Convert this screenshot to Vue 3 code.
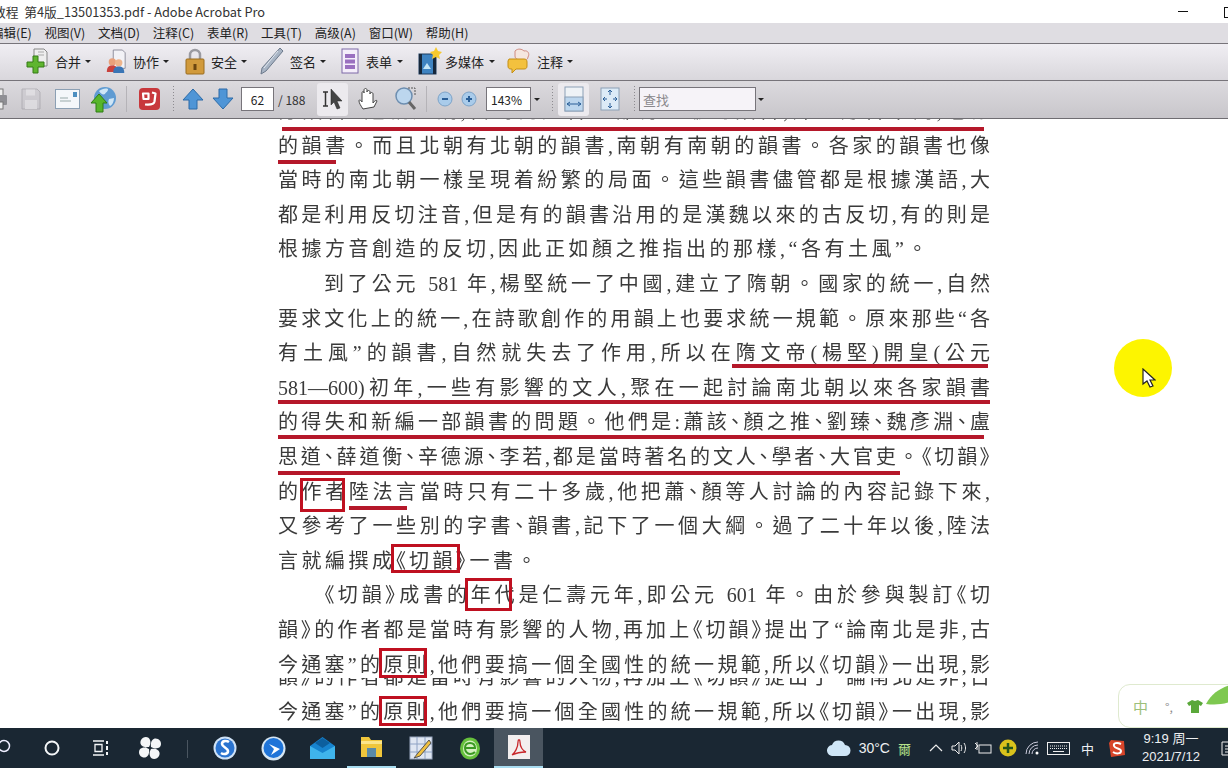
<script setup>
const menus = ['编辑(E)', '视图(V)', '文档(D)', '注释(C)', '表单(R)', '工具(T)', '高级(A)', '窗口(W)', '帮助(H)']

const clippedTop = '分韻書。這就是說,當時南北各地都有人編寫韻書,并且方言不同,也像'
const lines = [
  { t: '的韻書。而且北朝有北朝的韻書,南朝有南朝的韻書。各家的韻書也像' },
  { t: '當時的南北朝一樣呈現着紛繁的局面。這些韻書儘管都是根據漢語,大' },
  { t: '都是利用反切注音,但是有的韻書沿用的是漢魏以來的古反切,有的則是' },
  { t: '根據方音創造的反切,因此正如顏之推指出的那樣,“各有土風”。', last: true },
  { t: '到了公元 581 年,楊堅統一了中國,建立了隋朝。國家的統一,自然', indent: true },
  { t: '要求文化上的統一,在詩歌創作的用韻上也要求統一規範。原來那些“各' },
  { t: '有土風”的韻書,自然就失去了作用,所以在隋文帝(楊堅)開皇(公元' },
  { t: '581—600)初年,一些有影響的文人,聚在一起討論南北朝以來各家韻書' },
  { t: '的得失和新編一部韻書的問題。他們是:蕭該、顏之推、劉臻、魏彥淵、盧' },
  { t: '思道、薛道衡、辛德源、李若,都是當時著名的文人、學者、大官吏。《切韻》' },
  { t: '的作者陸法言當時只有二十多歲,他把蕭、顏等人討論的內容記錄下來,' },
  { t: '又參考了一些別的字書、韻書,記下了一個大綱。過了二十年以後,陸法' },
  { t: '言就編撰成《切韻》一書。', last: true },
  { t: '《切韻》成書的年代是仁壽元年,即公元 601 年。由於參與製訂《切', indent: true },
  { t: '韻》的作者都是當時有影響的人物,再加上《切韻》提出了“論南北是非,古' },
  { t: '今通塞”的原則,他們要搞一個全國性的統一規範,所以《切韻》一出現,影' }
]
const stripText = lines[14].t
const lastLine = lines[15].t

// 句号占整格，其余标点收窄
const pieces = (t) => t.split(/(。)/).filter(Boolean)

// 红色批注，坐标相对于 .doc
const marks = [
  { x: 282, y: 8, w: 702, h: 4 },
  { x: 278, y: 41, w: 58, h: 4 },
  { x: 732, y: 245, w: 256, h: 4 },
  { x: 278, y: 281, w: 712, h: 4 },
  { x: 278, y: 316, w: 706, h: 4 },
  { x: 278, y: 352, w: 622, h: 4 },
  { x: 349, y: 387, w: 58, h: 4 },
  { x: 300, y: 359, w: 45, h: 34, box: true },
  { x: 391, y: 425, w: 69, h: 29, box: true },
  { x: 465, y: 459, w: 47, h: 33, box: true },
  { x: 379, y: 529, w: 48, h: 30, box: true },
  { x: 379, y: 577, w: 48, h: 30, box: true }
]
const markStyle = (m) => ({ left: m.x + 'px', top: m.y + 'px', width: m.w + 'px', height: m.h + 'px' })
</script>

<template>
  <div class="screen">
    <div class="titlebar">
      <span class="title">教程&nbsp;&nbsp;第4版_13501353.pdf - Adobe Acrobat Pro</span>
      <span class="win-min"></span>
      <span class="win-max"></span>
    </div>

    <div class="menubar">
      <span v-for="m in menus" :key="m">{{ m }}</span>
    </div>

    <div class="tools-one">
      <div class="tool">
        <svg width="24" height="28" viewBox="0 0 24 28">
          <path d="M9 2h10l3 3v14H9z" fill="#eee" stroke="#888"/>
          <path d="M13 5h6M13 8h6" stroke="#aaa"/>
          <path d="M8 9h5v6h6v5h-6v6H8v-6H2v-5h6z" fill="#5fb52f" stroke="#357a16"/>
        </svg>
        <span>合并</span><i class="caret"></i>
      </div>
      <div class="tool">
        <svg width="22" height="28" viewBox="0 0 24 28">
          <path d="M9 2h10l3 3v17H9z" fill="#f2f2f6" stroke="#8a8a98"/>
          <circle cx="8" cy="15" r="4" fill="#e9a07a"/>
          <path d="M2 26c0-5 2-7 6-7s6 2 6 7z" fill="#c9413c"/>
          <circle cx="15" cy="16" r="4" fill="#edb48c"/>
          <path d="M9 27c0-5 2-7 6-7s6 2 6 7z" fill="#3a75b5"/>
        </svg>
        <span>协作</span><i class="caret"></i>
      </div>
      <div class="tool">
        <svg width="20" height="28" viewBox="0 0 20 28">
          <path d="M5 13V8a5 5 0 0 1 10 0v5" fill="none" stroke="#9a9aa0" stroke-width="2.5"/>
          <rect x="1" y="12" width="18" height="15" rx="1" fill="#d19a3c" stroke="#9a6c1e"/>
          <rect x="8.5" y="17" width="3" height="6" fill="#6b4510"/>
        </svg>
        <span>安全</span><i class="caret"></i>
      </div>
      <div class="tool">
        <svg width="24" height="28" viewBox="0 0 24 28">
          <path d="M20 1l3 3L6 24l-5 3 1-6z" fill="#a8b4c4" stroke="#6d7a8c"/>
          <path d="M18 4L4 21" stroke="#e2e8f0"/>
        </svg>
        <span>签名</span><i class="caret"></i>
      </div>
      <div class="tool wide">
        <svg width="18" height="28" viewBox="0 0 18 28">
          <rect x="1" y="2" width="16" height="24" fill="#f4eefa" stroke="#7e6aa8"/>
          <rect x="4" y="7" width="10" height="4" fill="#9a70c0"/>
          <rect x="4" y="12.500" width="10" height="4" fill="#9a70c0"/>
          <rect x="4" y="18" width="10" height="4" fill="#9a70c0"/>
        </svg>
        <span>表单</span><i class="caret"></i>
      </div>
      <div class="tool tight">
        <svg width="25" height="28" viewBox="0 0 25 28">
          <rect x="1" y="7" width="17" height="20" fill="#3f84c2" stroke="#1c3c60"/>
          <path d="M1 7h3v20H1zM15 7h3v20h-3z" fill="#16283c"/>
          <path d="M5 22l4-6 4 6z" fill="#c4e6f8"/>
          <path d="M18 0l2 4 4 1-3 3 1 4-4-2-4 2 1-4-3-3 4-1z" fill="#f6c92e"/>
        </svg>
        <span>多媒体</span><i class="caret"></i>
      </div>
      <div class="tool">
        <svg width="24" height="28" viewBox="0 0 24 28">
          <path d="M8 4c3-3 7-2 9 0 4-1 6 3 4 6 0 3-4 4-7 3-3 0-6-1-6-4z" fill="#f5e6df" stroke="#d08a80"/>
          <path d="M2 12h15c2 0 3 1 3 3v4c0 2-1 3-3 3H9l-4 4v-4H4c-2 0-3-1-3-3v-5z" fill="#f3c13e" stroke="#c48e14"/>
        </svg>
        <span>注释</span><i class="caret"></i>
      </div>
    </div>

    <div class="tools-two">
      <svg width="21" height="24" viewBox="0 0 21 24">
        <rect x="4" y="2" width="13" height="7" fill="#eee" stroke="#777"/>
        <rect x="1" y="8" width="20" height="10" rx="1" fill="#8f8f94"/>
        <rect x="4" y="15" width="13" height="7" fill="#eee" stroke="#777"/>
      </svg>
      <svg width="20" height="24" viewBox="0 0 20 24" opacity=".45">
        <path d="M1 2h15l3 3v17H1z" fill="#c6c4ca" stroke="#8b8990"/>
        <rect x="5" y="2.500" width="9" height="6" fill="#ecebee"/>
        <rect x="4" y="13" width="12" height="9" fill="#ecebee"/>
      </svg>
      <svg width="25" height="20" viewBox="0 0 25 20">
        <rect x=".5" y=".5" width="24" height="19" fill="#f4f7fa" stroke="#8ca0b4"/>
        <rect x="18" y="3" width="4" height="5" fill="#4d8fc0"/>
        <path d="M5 9h8M5 12h11" stroke="#9aa"/>
      </svg>
      <svg width="26" height="28" viewBox="0 0 26 28">
        <circle cx="15" cy="13" r="11" fill="#5f9bd2"/>
        <path d="M9 6c3-2 6-3 9-2 0 3-2 3-3 5-2 1-4 0-6-3zM19 14l5-1c0 4-2 7-4 8-2-2-2-5-1-7z" fill="#cfe6f6"/>
        <path d="M9 9l8 9h-4v9H6v-9H1z" fill="#57b52a" stroke="#2f7d14"/>
      </svg>
      <i class="sep"></i>
      <svg width="21" height="24" viewBox="0 0 21 24">
        <rect x="0" y="1" width="21" height="22" rx="4" fill="#c8383c"/>
        <path d="M4 6.500h5.500v5.500H4.500zM13 5.500l3.500 1-1 8c-.5 3-4 3.500-9.500 3" fill="none" stroke="#fff" stroke-width="2.200" stroke-linejoin="round"/>
      </svg>
      <i class="grip"></i>
      <svg width="22" height="22" viewBox="0 0 22 22"><path d="M11 1l10 11h-6v9H7v-9H1z" fill="#4f95d6" stroke="#2c6ba8"/></svg>
      <svg width="22" height="22" viewBox="0 0 22 22"><path d="M7 1h8v9h6L11 21 1 10h6z" fill="#4f95d6" stroke="#2c6ba8"/></svg>
      <div class="field page-no">62</div>
      <span class="page-total">/ 188</span>
      <div class="pressed">
        <svg width="26" height="24" viewBox="0 0 26 24">
          <path d="M3 5h5M3 19h5M5.500 5v14" stroke="#333" stroke-width="1.500" fill="none"/>
          <path d="M11 2l11 12h-5l3 7-3 1-3-7-3 3z" fill="#444" stroke="#222" stroke-width=".5"/>
        </svg>
      </div>
      <svg width="21" height="24" viewBox="0 0 21 24">
        <path d="M5 22c-2-3-4-6-4-8s2-1 3 1V6c0-2 2-2 2 0V3c0-2 3-2 3 0v2c0-2 3-2 3 0v2c0-2 3-2 3 0v9c2-3 4-3 4-2l-3 6z" fill="#fff" stroke="#444"/>
      </svg>
      <svg width="22" height="26" viewBox="0 0 22 26">
        <circle cx="9" cy="10" r="8" fill="#bcd6ee" stroke="#6d8eb0" stroke-width="1.500"/>
        <path d="M13 2h7v7" fill="none" stroke="#555" stroke-dasharray="2 1"/>
        <path d="M14 16l6 7" stroke="#666" stroke-width="3"/>
      </svg>
      <i class="sep"></i>
      <svg width="16" height="16" viewBox="0 0 16 16"><circle cx="8" cy="8" r="7" fill="#a9cbea" stroke="#7da3c8"/><rect x="5" y="7" width="6" height="2" fill="#2a5f98"/></svg>
      <svg width="16" height="16" viewBox="0 0 16 16"><circle cx="8" cy="8" r="7" fill="#a9cbea" stroke="#7da3c8"/><path d="M5 8h6M8 5v6" stroke="#2a5f98" stroke-width="2"/></svg>
      <div class="field zoom-no">143%</div>
      <i class="caret"></i>
      <i class="grip"></i>
      <div class="pressed">
        <svg width="20" height="26" viewBox="0 0 20 26">
          <rect x="1" y="1" width="18" height="24" fill="#eef2f6" stroke="#8ba0b6"/>
          <rect x="1" y="11" width="18" height="14" fill="#bcd6ee" stroke="#8ba0b6"/>
          <path d="M3 18h14M3 18l3-2M3 18l3 2M17 18l-3-2M17 18l-3 2" stroke="#2a5f98" fill="none"/>
        </svg>
      </div>
      <svg width="20" height="24" viewBox="0 0 20 24">
        <rect x="1" y="1" width="18" height="22" fill="#dcebf7" stroke="#8ba0b6"/>
        <path d="M10 3v5M8 5l2-2 2 2M10 21v-5M8 19l2 2 2-2M3 12h4M5 10l-2 2 2 2M17 12h-4M15 10l2 2-2 2" stroke="#2a5f98" fill="none"/>
      </svg>
      <i class="grip"></i>
      <div class="field find">查找</div>
      <i class="caret"></i>
    </div>

    <div class="doc">
      <div class="page">
        <div class="line">{{ clippedTop }}</div>
        <div
          v-for="(l, i) in lines"
          :key="i"
          class="line"
          :class="{ last: l.last, indent: l.indent }"
        ><span
          v-for="(p, j) in pieces(l.t)"
          :key="j"
          :class="{ stop: p === '。' }"
        >{{ p }}</span></div>
        <div class="strip"><div class="line">{{ stripText }}</div></div>
        <div class="line">{{ lastLine }}</div>
      </div>
      <div
        v-for="(m, i) in marks"
        :key="'m' + i"
        class="mark"
        :class="{ box: m.box }"
        :style="markStyle(m)"
      ></div>
      <div class="spot">
        <svg width="14" height="20" viewBox="0 0 14 20">
          <path d="M1 1v15l4-3 3 6 3-1-3-6h5z" fill="#fff" stroke="#222" stroke-width="1.200"/>
        </svg>
      </div>
      <div class="ime">
        <span class="ime-zh">中</span>
        <span class="ime-dot">°,</span>
        <svg width="16" height="14" viewBox="0 0 16 14"><path d="M5 1l3 1 3-1 5 3-2 3-2-1v8H4V6L2 7 0 4z" fill="#5aa83a"/></svg>
        <svg class="ime-leaf" width="24" height="20" viewBox="0 0 24 20"><path d="M0 19C5 9 14 3 24 0v17C15 20 7 20 0 19z" fill="#7ec850"/></svg>
      </div>
    </div>

    <div class="taskbar">
      <div class="task-left">
        <div class="slot">
          <svg width="18" height="18" viewBox="0 0 18 18"><circle cx="10" cy="7" r="5.500" fill="none" stroke="#eef" stroke-width="1.500"/><path d="M6 11l-5 6" stroke="#eef" stroke-width="1.500"/></svg>
        </div>
        <div class="slot">
          <svg width="16" height="16" viewBox="0 0 16 16"><circle cx="8" cy="8" r="6.500" fill="none" stroke="#f4f6f8" stroke-width="2"/></svg>
        </div>
        <div class="slot">
          <svg width="18" height="16" viewBox="0 0 18 16"><path d="M1 1h11M1 15h11M3 4.500h7v7H3z" fill="none" stroke="#f4f6f8" stroke-width="1.300"/><path d="M15 1v3M15 6v4M15 12v3" stroke="#f4f6f8" stroke-width="2"/></svg>
        </div>
        <div class="slot">
          <svg width="22" height="24" viewBox="0 0 22 24">
            <path d="M10 11C3 12 0 8 2 4s8-4 9 0c1 3 0 5-1 7zM12 11c-1-7 3-10 7-8s4 8 0 9c-3 1-5 0-7-1zM12 13c7-1 10 3 8 7s-8 4-9 0c-1-3 0-5 1-7zM10 13c1 7-3 10-7 8s-4-8 0-9c3-1 5 0 7 1z" fill="#f4f6f8"/>
          </svg>
        </div>
        <i class="task-sep"></i>
        <div class="slot">
          <svg width="24" height="24" viewBox="0 0 24 24"><circle cx="12" cy="12" r="11.500" fill="#cfe2f6"/><circle cx="12" cy="12" r="9.500" fill="#2b74d0"/><path d="M16 6c-3-2-7-1-7 2s6 4 6 7-4 4-7 2" fill="none" stroke="#fff" stroke-width="2.600"/></svg>
        </div>
        <div class="slot">
          <svg width="25" height="25" viewBox="0 0 25 25"><circle cx="12.500" cy="12.500" r="12" fill="#d6e6f3"/><circle cx="12.500" cy="12" r="10" fill="#1f74d8"/><path d="M8 8l11 5-9 6 3-6z" fill="#fff"/></svg>
        </div>
        <div class="slot">
          <svg width="25" height="22" viewBox="0 0 25 22"><path d="M12.500 0L25 9v13H0V9z" fill="#1784cf"/><path d="M0 9l12.500 7L25 9v13H0z" fill="#3fb4ec"/><path d="M5 6l7.500-5L20 6l-7.500 5z" fill="#0d5f9e"/></svg>
        </div>
        <div class="slot active-line">
          <svg width="23" height="22" viewBox="0 0 23 22"><path d="M1 1h8l2 3h11v17H1z" fill="#f0c63c"/><rect x="1" y="5" width="21" height="3" fill="#fbe58a"/><rect x="7" y="12" width="9" height="9" fill="#5a8aa8"/></svg>
        </div>
        <div class="slot">
          <svg width="24" height="24" viewBox="0 0 24 24"><rect x="1" y="1" width="22" height="22" fill="#dfe6f2" stroke="#9aa8c0"/><path d="M1 8h22M1 16h22M8 1v22M16 1v22" stroke="#8ea2c4"/><path d="M20 4L9 17l-4 5 6-2 11-13z" fill="#f0c040" stroke="#555"/></svg>
        </div>
        <div class="slot">
          <svg width="22" height="24" viewBox="0 0 22 24"><ellipse cx="11" cy="12.500" rx="10" ry="11" fill="#66c13c"/><ellipse cx="11" cy="12.500" rx="7" ry="8" fill="#d5f0c0"/><path d="M6 12h10c0-3-2-5-5-5s-5 2-5 5 2 6 5 6c2 0 4-1 5-2" fill="none" stroke="#3a9a22" stroke-width="2"/></svg>
        </div>
        <div class="slot current">
          <svg width="22" height="24" viewBox="0 0 22 24"><rect x="0" y="0" width="22" height="24" fill="#f3eeee"/><path d="M4 20c3-2 6-8 6-13 0-3 2-3 2 0 0 5 3 9 6 10-4 0-10 1-14 3z" fill="none" stroke="#c8282c" stroke-width="1.300"/></svg>
        </div>
      </div>
      <div class="tray">
        <svg class="t-cloud" width="24" height="16" viewBox="0 0 24 16"><path d="M6 16a5.500 5.500 0 0 1-1-11 7 7 0 0 1 13 0 5.500 5.500 0 0 1 0 11z" fill="#cfe6f7"/></svg>
        <span class="t-temp">30°C</span>
        <span class="t-aqi">爾</span>
        <svg class="t-chev" width="14" height="8" viewBox="0 0 14 8"><path d="M1 7l6-6 6 6" fill="none" stroke="#eee" stroke-width="1.200"/></svg>
        <svg class="t-vol" width="16" height="14" viewBox="0 0 16 14"><path d="M1 5h3l4-4v12L4 9H1z" fill="none" stroke="#eee"/><path d="M10 4c1 2 1 4 0 6M13 2c2 3 2 7 0 10" fill="none" stroke="#eee"/></svg>
        <svg class="t-bat" width="18" height="12" viewBox="0 0 18 12"><rect x="5" y="3" width="12" height="8" fill="none" stroke="#eee"/><path d="M1 1l3 3-3 3M3 0v8" stroke="#eee" fill="none"/></svg>
        <svg class="t-plus" width="18" height="18" viewBox="0 0 18 18"><circle cx="9" cy="9" r="8.500" fill="#d9c21c"/><path d="M9 4v10M4 9h10" stroke="#24541a" stroke-width="2.500"/></svg>
        <svg class="t-wifi" width="14" height="14" viewBox="0 0 14 14"><path d="M1 13A12 12 0 0 1 13 1M4 13a9 9 0 0 1 9-9M7 13a6 6 0 0 1 6-6" fill="none" stroke="#ccd" /><circle cx="12" cy="12" r="1.500" fill="#fff"/></svg>
        <svg class="t-kbd" width="23" height="13" viewBox="0 0 23 13"><rect x=".5" y=".5" width="22" height="12" fill="none" stroke="#eee"/><path d="M3 4h17M3 6.500h17" stroke="#eee" stroke-dasharray="1 1"/><path d="M6 9.500h11" stroke="#eee"/></svg>
        <span class="t-ime">中</span>
        <svg class="t-sogou" width="16" height="18" viewBox="0 0 16 18"><path d="M2 1l13 1 1 14-14 2L0 4z" fill="#d8452a"/><path d="M12 5c-4-2-8-1-7 2s7 2 7 5-5 3-8 1" fill="none" stroke="#fff" stroke-width="2"/></svg>
        <div class="clock"><span>9:19 周一</span><span>2021/7/12</span></div>
        <svg class="t-note" width="12" height="15" viewBox="0 0 12 15"><path d="M1 1h11M1 14h11M1 1v13M4 5h8M4 8h8M4 11h8" stroke="#eee" fill="none"/></svg>
      </div>
    </div>
  </div>
</template>

<style>
html, body { margin: 0; background: #fff; overflow: hidden; }
</style>

<style scoped>
.screen {
  width: 1228px; height: 768px; overflow: hidden;
  display: flex; flex-direction: column;
  font-family: "Noto Sans CJK SC", "Liberation Sans", sans-serif;
  color: #222; background: #fff;
}
.titlebar {
  height: 23px; flex: none; background: #fff;
  display: flex; align-items: center; position: relative;
  font-size: 12.750px; color: #333;
}
.title { margin-left: -7px; white-space: nowrap; }
.win-min { position: absolute; left: 1178px; top: 11px; width: 10px; height: 1px; background: #111; }
.win-max { position: absolute; left: 1224px; top: 7px; width: 10px; height: 9px; border: 1px solid #111; }

.menubar {
  height: 19px; flex: none; background: #dfdde2; border-bottom: 1px solid #77747a;
  display: flex; align-items: center; gap: 12.750px; padding-bottom: 1px;
  margin-left: -9px; font-size: 12.500px; line-height: 18px; white-space: nowrap;
}

.tools-one {
  height: 34px; flex: none; border-bottom: 1px solid #77747a; padding-bottom: 2px;
  background: linear-gradient(#f0eef3, #d9d7dc);
  display: grid; grid-template-columns: 80px 80px 75px 81px 77px 89px auto;
  padding-left: 25px; font-size: 13px; align-items: center;
}
.tool { display: flex; align-items: center; gap: 6px; }
.tool.wide { gap: 7px; }
.tool.tight { gap: 2px; }
.tool .caret { margin-left: -2px; }
.tool.tight .caret { margin-left: 3px; }
.caret {
  display: inline-block; width: 0; height: 0; flex: none;
  border-left: 3px solid transparent; border-right: 3px solid transparent;
  border-top: 3px solid #222;
}

.tools-two {
  height: 36px; flex: none; margin-left: -14px; padding-bottom: 1px;
  background: linear-gradient(#dcdade, #c8c6cb);
  border-bottom: 1px solid #6f6d72;
  display: grid; align-items: center; justify-items: start;
  grid-template-columns: 35px 34px 35px 36px 13px 33px 10px 30px 29px 37px 39px 41px 37px 31px 11px 24px 25px 48px 17px 7px 42px 33px 6px 119px auto;
  font-size: 12px;
}
.sep { width: 1px; height: 26px; background: #b5b3b8; }
.grip { width: 3px; height: 28px; background: radial-gradient(circle, #8d8b90 1px, transparent 1px) 0 0 / 3px 3px; }
.field {
  box-sizing: border-box; height: 24px; background: #fff; border: 1px solid #77747a;
  display: flex; align-items: center; font-size: 12px;
}
.page-no { width: 33px; justify-content: center; }
.page-total { color: #333; }
.zoom-no { width: 45px; padding-left: 4px; }
.find { width: 117px; padding-left: 3px; background: #f6f3f8; color: #8a888c; font-size: 13px; }
.pressed {
  box-sizing: border-box; width: 31px; height: 33px; border-radius: 3px;
  background: #eceaee; display: flex; align-items: center; justify-content: center;
}

.doc { flex: 1; min-height: 0; position: relative; overflow: hidden; background: #fff; }
.page {
  width: 712px; margin: -25px 0 0 278px;
  font-family: "Liberation Serif", "Noto Sans CJK TC", "Noto Sans CJK SC", serif;
  font-feature-settings: "palt";
  font-size: 20px; font-weight: 400; color: #3a3a3a; filter: blur(.3px);
}
.stop { font-feature-settings: normal; }
.line { height: 34.6px; line-height: 34.6px; text-align: justify; text-align-last: justify; }
.line.last { text-align-last: left; letter-spacing: 3.5px; }
.line.indent { padding-left: 46px; }
.strip { height: 10px; overflow: hidden; margin: -4px 0 7px; }
.strip .line { margin-top: -18px; }

.mark { position: absolute; background: #b5182a; }
.mark.box { box-sizing: border-box; background: none; border: 3.500px solid #bf1020; }

.spot {
  position: absolute; left: 1114px; top: 220px; width: 58px; height: 58px;
  border-radius: 50%; background: #fdf500;
}
.spot svg { position: absolute; left: 28px; top: 29px; }

.ime {
  position: absolute; left: 1118px; top: 565px; width: 130px; height: 44px;
  box-sizing: border-box; background: #fff; border: 1px solid #dfeacf; border-radius: 12px;
  display: flex; align-items: center; padding-left: 14px;
}
.ime-zh { color: #9cc07a; font-size: 15px; }
.ime-dot { color: #8a8a8a; font-size: 12px; margin: 0 14px 0 17px; }
.ime-leaf { position: absolute; left: 87px; top: 0; }

.taskbar {
  height: 40px; flex: none; background: #1a2733; color: #eef0f2;
  display: flex; align-items: stretch; justify-content: space-between;
}
.task-left { display: flex; margin-left: -22px; }
.slot { width: 49px; display: flex; align-items: center; justify-content: center; box-sizing: border-box; }
.task-sep { width: 1px; margin: 12px 12px 10px 13px; background: #4a5560; }
.active-line { border-bottom: 2px solid #a8dcf0; }
.current { background: #4a5560; border-bottom: 2px solid #a8dcf0; }

.tray { display: flex; align-items: center; font-size: 13px; }
.t-cloud { margin-right: 8px; }
.t-temp { font-size: 14px; margin-right: 8px; font-family: "Liberation Sans", sans-serif; }
.t-aqi { color: #b6e08a; font-size: 13px; margin-right: 18px; }
.t-chev { margin-right: 8px; }
.t-vol { margin-right: 7px; }
.t-bat { margin-right: 7px; }
.t-plus { margin-right: 8px; }
.t-wifi { margin-right: 8px; }
.t-kbd { margin-right: 11px; }
.t-ime { margin-right: 15px; }
.t-sogou { margin-right: 13px; }
.clock {
  display: flex; flex-direction: column; align-items: center; width: 66px;
  font-size: 13px; line-height: 18px; font-family: "Liberation Sans", "Noto Sans CJK SC", sans-serif;
  margin-right: 17px;
}
.t-note { margin-right: -5px; }
</style>
